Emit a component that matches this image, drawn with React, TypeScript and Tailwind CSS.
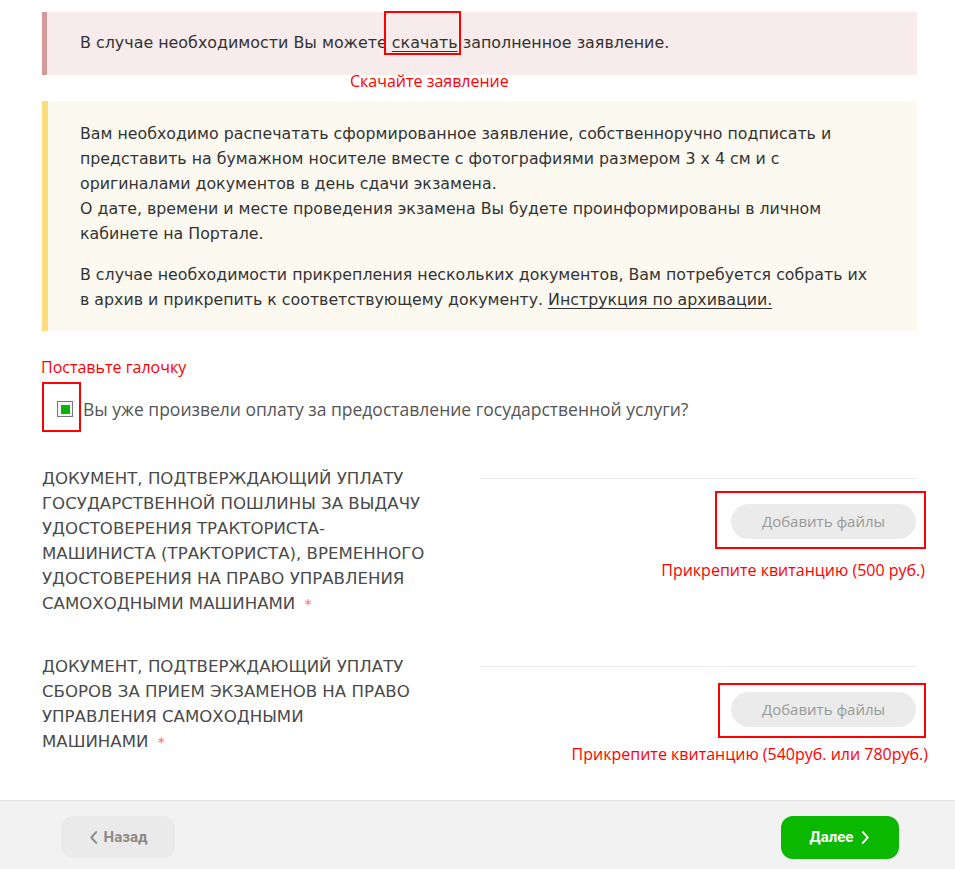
import React from "react";

const MAIN = { fontFamily: '"DejaVu Sans", sans-serif' };
const ANN = { fontFamily: '"Open Sans", sans-serif' };

function Chevron({ dir, className }: { dir: "l" | "r"; className?: string }) {
  return (
    <svg viewBox="0 0 10 16" className={className} fill="none" stroke="currentColor" strokeWidth="2.2" strokeLinecap="round" strokeLinejoin="round">
      {dir === "l" ? <path d="M8 2 L2.5 8 L8 14" /> : <path d="M2 2 L7.5 8 L2 14" />}
    </svg>
  );
}

function UploadRow({ label, note, boxCls, noteCls }: { label: React.ReactNode; note: string; boxCls: string; noteCls: string }) {
  return (
    <div className="flex">
      <div className="w-[420px] text-[16.6px] leading-[25px] text-[#4a4a4a] uppercase whitespace-nowrap" style={MAIN}>
        {label}
      </div>
      <div className="ml-[18px] flex-1 flex flex-col items-end">
        <div className="w-full h-px bg-[#ececec] mt-[12px]" />
        <div className="relative mt-[25px] mr-px">
          <div className={"absolute border-2 border-[#f00] " + boxCls} />
          <button className="w-[185px] h-[35px] rounded-full bg-[#ebebeb] text-[#999] text-[15px]" style={ANN}>
            Добавить файлы
          </button>
        </div>
        <div className={"text-[16px] leading-[20px] text-[#f00] whitespace-nowrap " + noteCls} style={ANN}>
          {note}
        </div>
      </div>
    </div>
  );
}

export default function App() {
  return (
    <div className="w-[955px] h-[869px] bg-white flex flex-col overflow-hidden">
      <div className="mx-[42px] w-[875px] flex-1">
        {/* pink notice */}
        <div className="mt-[12px] h-[63px] border-l-[5px] border-[#d49a9a] bg-[#f7ebeb] pl-[33px] flex items-center">
          <p className="text-[15.9px] text-[#333] pb-[1px]" style={MAIN}>
            В случае необходимости Вы можете{" "}
            <span className="relative underline underline-offset-[3px] decoration-1">
              скачать
              <span className="absolute left-[-8px] right-[-3px] top-[-22px] h-[44px] border-2 border-[#f00]" />
            </span>{" "}
            заполненное заявление.
          </p>
        </div>
        <div className="h-[26px] pl-[308px] text-[16px] leading-[12px] text-[#f00]" style={ANN}>
          Скачайте заявление
        </div>

        {/* yellow notice */}
        <div className="h-[230px] border-l-[6px] border-[#fcdc7c] bg-[#fcf9f1] pl-[32px] pt-[20px] text-[15.8px] leading-[25px] text-[#333]" style={MAIN}>
          <p>
            Вам необходимо распечатать сформированное заявление, собственноручно подписать и
            <br />
            представить на бумажном носителе вместе с фотографиями размером 3 х 4 см и с
            <br />
            оригиналами документов в день сдачи экзамена.
            <br />
            О дате, времени и месте проведения экзамена Вы будете проинформированы в личном
            <br />
            кабинете на Портале.
          </p>
          <p className="mt-[16px]">
            В случае необходимости прикрепления нескольких документов, Вам потребуется собрать их
            <br />
            в архив и прикрепить к соответствующему документу.{" "}
            <span className="underline underline-offset-[3px] decoration-1">Инструкция по архивации.</span>
          </p>
        </div>

        <div className="mt-[26px] text-[16px] leading-[20px] text-[#f00] -ml-px" style={ANN}>
          Поставьте галочку
        </div>

        {/* checkbox */}
        <div className="mt-[5px] flex items-start">
          <div className="w-[39px] h-[50px] border-2 border-[#f00] relative shrink-0">
            <div className="absolute left-[13px] top-[17px] w-[16px] h-[16px] border border-[#777] bg-[#f4f4f4] flex items-center justify-center">
              <div className="w-[9px] h-[9px] bg-[#0bb20b]" />
            </div>
          </div>
          <div className="ml-[2px] mt-[16px] text-[17.5px] leading-[22px] text-[#555] whitespace-nowrap" style={ANN}>
            Вы уже произвели оплату за предоставление государственной услуги?
          </div>
        </div>

        <div className="mt-[34px]">
          <UploadRow
            label={
              <>
                Документ, подтверждающий уплату
                <br />
                государственной пошлины за выдачу
                <br />
                удостоверения тракториста-
                <br />
                машиниста (тракториста), временного
                <br />
                удостоверения на право управления
                <br />
                самоходными машинами <span className="text-[#f66] text-[14px] ml-[4px]">*</span>
              </>
            }
            note="Прикрепите квитанцию (500 руб.)"
            boxCls="left-[-16px] right-[-10px] top-[-13px] bottom-[-10px]"
            noteCls="mt-[21px] -mr-[8px]"
          />
        </div>

        <div className="mt-[37px]">
          <UploadRow
            label={
              <>
                Документ, подтверждающий уплату
                <br />
                сборов за прием экзаменов на право
                <br />
                управления самоходными
                <br />
                машинами <span className="text-[#f66] text-[14px] ml-[4px]">*</span>
              </>
            }
            note="Прикрепите квитанцию (540руб. или 780руб.)"
            boxCls="left-[-13px] right-[-10px] top-[-9px] bottom-[-11px]"
            noteCls="mt-[17px] -mr-[11px]"
          />
        </div>
      </div>

      {/* footer */}
      <div className="h-[69px] border-t border-[#e4e4e4] bg-[#f2f2f2] flex items-start justify-between pt-[15px] pl-[61px] pr-[56px] shrink-0">
        <button className="w-[114px] h-[42px] rounded-[12px] bg-[#eaeaea] flex items-center justify-center gap-[6px] text-[#8a8a8a] font-bold text-[15px]" style={{ fontFamily: '"Roboto", sans-serif' }}>
          <Chevron dir="l" className="w-[9px] h-[15px]" />
          Назад
        </button>
        <button className="w-[118px] h-[43px] rounded-[12px] bg-[#0ab800] flex items-center justify-center gap-[8px] text-white font-bold text-[15px]" style={{ fontFamily: '"Roboto", sans-serif' }}>
          Далее
          <Chevron dir="r" className="w-[9px] h-[15px]" />
        </button>
      </div>
    </div>
  );
}
